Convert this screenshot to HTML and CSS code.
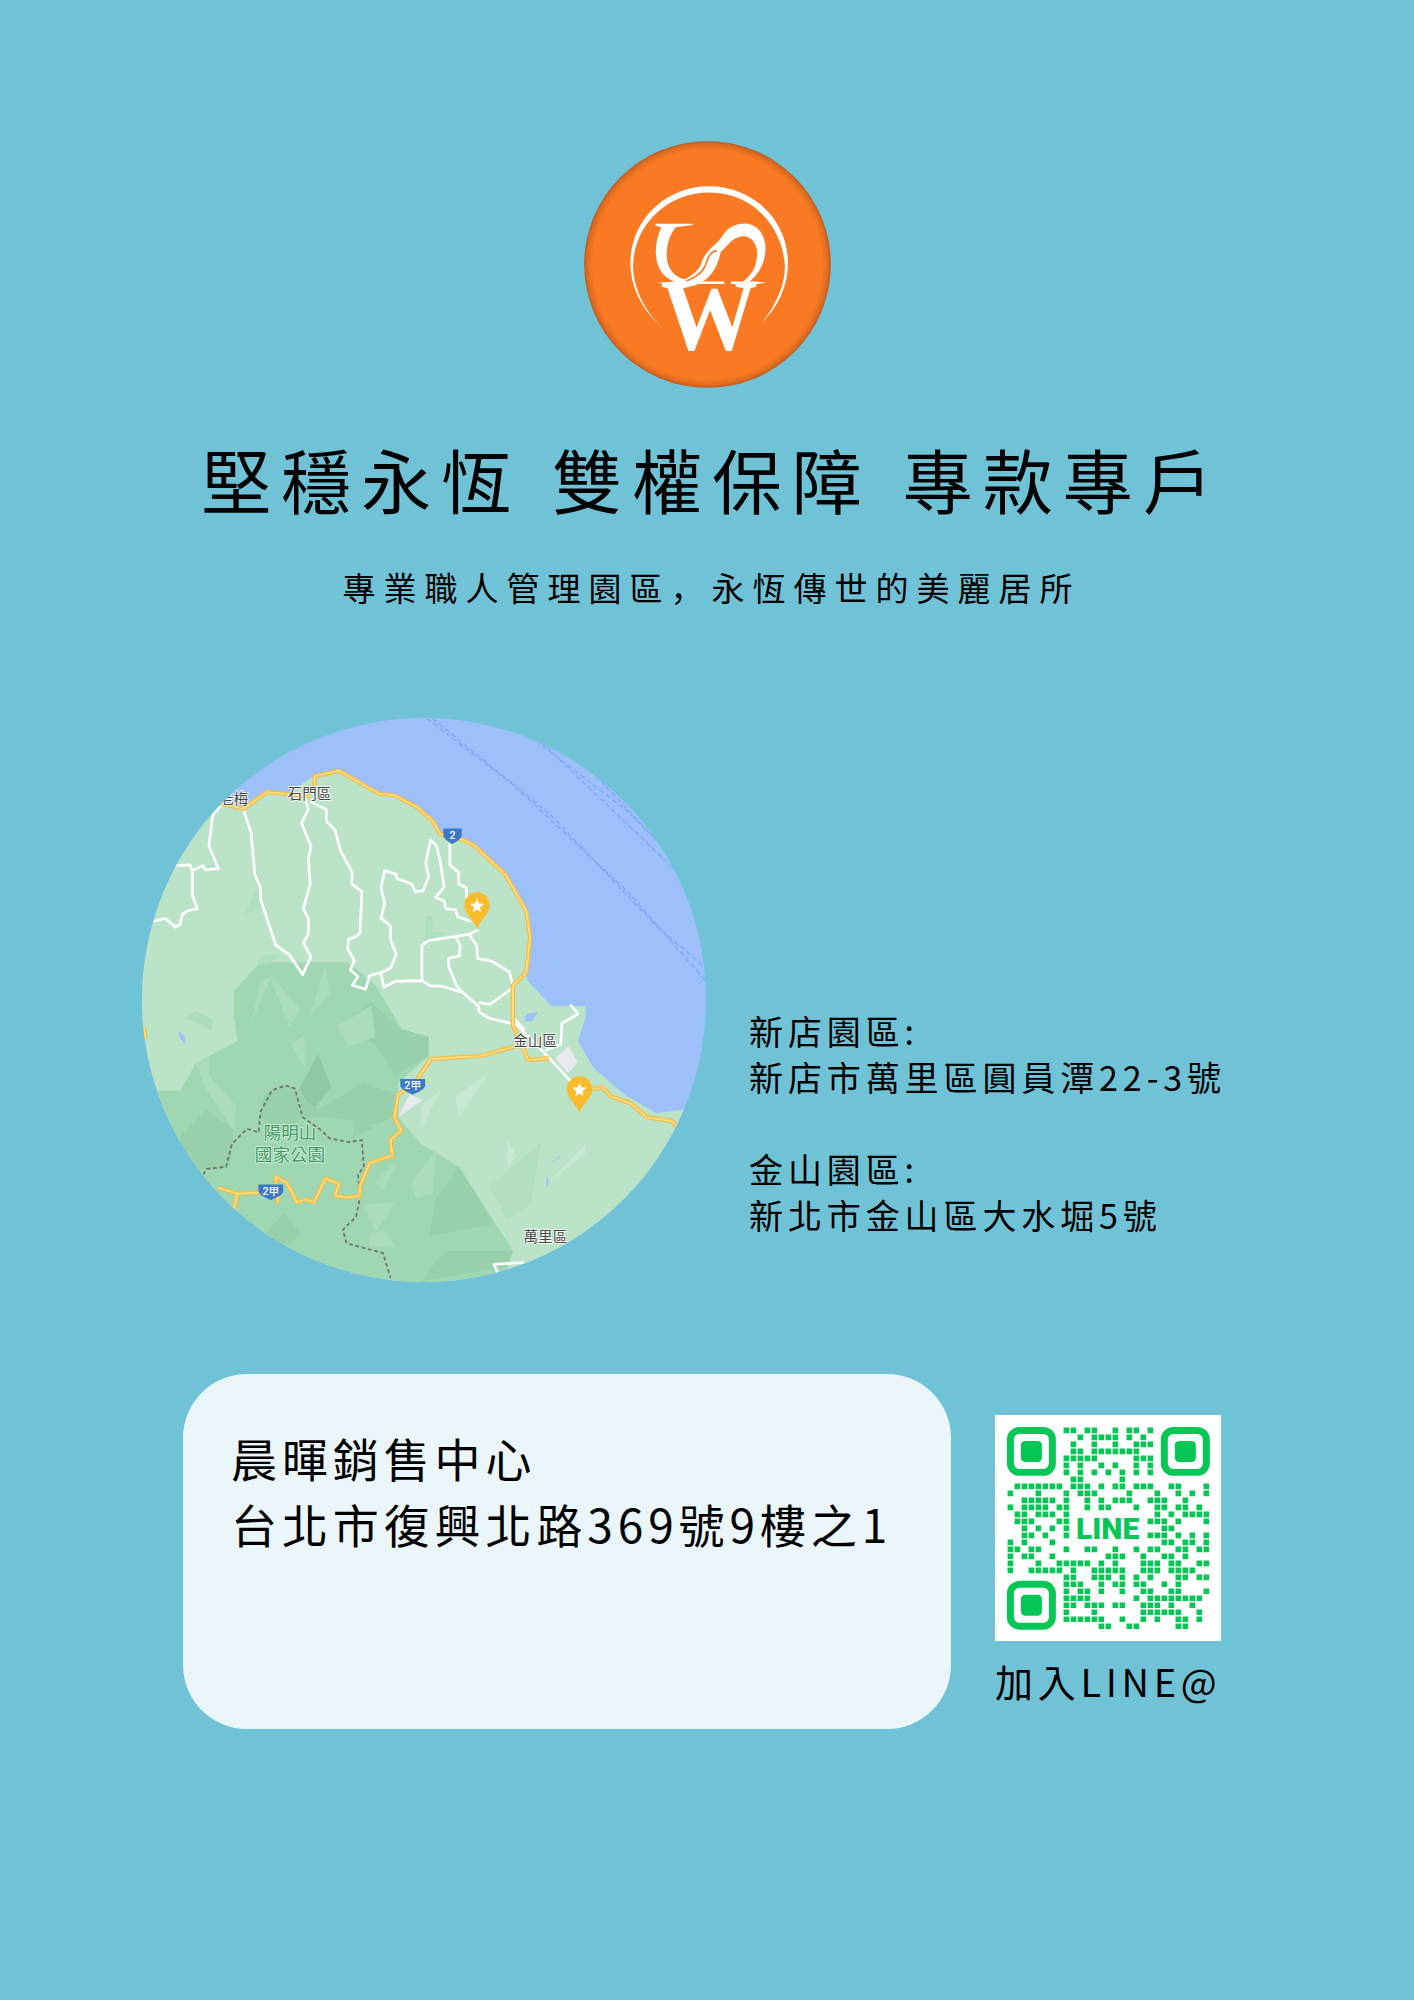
FILE: index.html
```html
<!DOCTYPE html>
<html lang="zh-Hant">
<head>
<meta charset="utf-8">
<title>堅穩永恆 雙權保障 專款專戶</title>
<link rel="stylesheet" href="styles.css">
</head>
<body>
<main class="page">
  <svg class="logo" viewBox="72 65 736 737" aria-label="logo">
    <defs>
      <radialGradient id="logoFill" cx="50%" cy="50%" r="50%">
        <stop offset="0.93" stop-color="#f97a23"/>
        <stop offset="0.98" stop-color="#dd6a1f"/>
        <stop offset="1" stop-color="#b75a20"/>
      </radialGradient>
    </defs>
    <circle cx="440" cy="433.500" r="368" fill="url(#logoFill)"/>
    <path class="logo-white" d="M305 622C245 570 210 500 210 430 210 300 315 200 445 200 575 200 680 300 680 430 680 500 650 560 600 610 640 560 671 500 671 440 665 315 570 219 445 219 320 219 222 315 218 435 218 500 250 570 305 622Z"/>
    <text class="logo-w" x="300" y="689" textLength="290" lengthAdjust="spacingAndGlyphs">W</text>
    <path class="logo-white" d="M285 312H395V316L345 322C330 340 318 370 318 410 320 450 345 475 380 480L365 490C345 488 325 480 310 465 278 430 280 370 302 322L285 318Z"/>
    <path class="logo-white" d="M360 485C395 465 415 455 425 420 440 385 470 375 490 340 510 315 540 308 560 312 600 320 618 360 612 400 608 440 585 470 565 485H545C575 465 590 430 588 395 585 365 565 345 540 350 510 355 495 385 480 395 470 440 450 480 400 497L365 497Z"/>
    <path class="logo-slit" d="M468 392C445 395 440 420 432 440 420 465 395 475 375 484"/>
    <path class="logo-white" d="M285 488L345 484H490V492H345Z"/>
    <path class="logo-white" d="M510 484H585L615 488 585 492H510Z"/>
  </svg>

  <h1 class="title">堅穩永恆 雙權保障 專款專戶</h1>
  <p class="subtitle">專業職人管理園區<span class="punct" lang="ja">，</span>永恆傳世的美麗居所</p>

  <section class="locations">
    <div class="map">
      <svg class="map-svg" viewBox="30 47 1475 1473" aria-label="map">
        <defs>
          <path id="mainRoads" d="M230 268L295 284 355 240 470 250M480 240L482 198 545 184 650 244 690 248 750 280 790 315 810 350 870 365 900 380 980 455 1035 550 1045 620 1035 712 1000 745 1000 850 1040 940 1095 936M1005 905L915 930 785 938 740 1005 700 1030 690 1090 708 1125 680 1150 685 1190 625 1210 600 1270 600 1295 565 1300 535 1295 545 1265 510 1250 480 1312 455 1305 435 1312 410 1262 380 1245 380 1285 280 1290 230 1275M280 1290L270 1330M385 1285L385 1315M1174 1020L1235 1012 1255 1035 1310 1055 1350 1090 1415 1100 1432 1118M35 855L40 885"/>
          <g id="pin">
            <path class="pin-body" d="M906 597C895 570 873 560 873 535A33 33 0 1 1 939 535C939 560 917 570 906 597Z"/>
            <polygon class="pin-star" points="906,519 911,531 924,532 914,541 917,554 906,547 895,554 898,541 888,532 901,531"/>
          </g>
          <path id="shield" d="M-24 -17H24V2C20 14 8 18 0 24-8 18-20 14-24 2Z"/>
        </defs>
        <rect class="sea" x="0" y="0" width="1568" height="1568"/>
        <path class="sea-lane" d="M775 47L1000 220 1300 500 1505 735M790 47L1100 300 1375 590 1505 700M1060 105L1300 290 1480 470M1075 110L1505 520M1215 195L1380 370"/>
        <polygon class="land" points="0,300 230,270 295,285 355,240 410,243 480,198 545,183 650,243 690,247 750,280 790,315 810,350 870,365 900,380 980,455 1035,550 1045,620 1035,720 1040,735 1100,800 1190,800 1190,830 1170,890 1210,960 1290,1030 1375,1080 1450,1070 1568,1000 1568,1568 0,1568"/>
        <polygon class="sea" points="1035,820 1065,815 1050,840 1030,840"/>
        <polygon class="sea" points="125,865 140,875 145,900 130,885"/>
        <polygon class="sea" points="1115,1195 1128,1190 1100,1210"/>
        <rect class="sea" x="1088" y="1248" width="5" height="22"/>
        <polygon class="hill" points="270,760 340,685 570,685 640,745 710,860 780,880 780,930 700,1000 700,1090 760,1160 860,1220 1000,1440 990,1470 960,1568 0,1568 0,1020 130,1020 170,950 280,890 270,820"/>
        <polygon class="hill-dark" points="440,1020 490,925 525,1010 480,1070"/>
        <polygon class="hill-mid" points="630,790 710,860 780,880 780,930 690,980 640,900 540,850"/>
        <polygon class="hill-mid" points="440,1030 490,1070 610,1000 695,1030 690,1090 640,1110 520,1090 450,1090"/>
        <polygon class="hill-mid" points="350,1030 405,1007 430,1015 450,1090 400,1130 340,1090"/>
        <polygon class="hill-mid" points="860,1220 950,1370 780,1400 800,1300"/>
        <polygon class="hill-mid" points="820,1440 1000,1440 985,1480 760,1520"/>
        <polygon class="hill-mid" points="130,1140 200,1070 270,1125 260,1220 190,1230 130,1220"/>
        <polygon class="hill-mid" points="590,1095 640,1115 580,1145"/>
        <polygon class="hill-mid" points="350,1400 400,1340 450,1400 360,1440"/>
        <polygon class="hill-light" points="170,950 205,935 205,980 275,1060 270,1125 200,1020"/>
        <polygon class="hill-light" points="370,720 445,810 415,855 367,725 315,845 340,735"/>
        <polygon class="hill-light" points="145,830 172,813 215,835 212,862"/>
        <polygon class="hill-light" points="420,900 455,875 455,960"/>
        <polygon class="hill-light" points="540,850 630,800 640,880 570,905"/>
        <polygon class="hill-light" points="470,820 510,690 520,770"/>
        <polygon class="hill-light" points="610,1320 695,1310 640,1390"/>
        <polygon class="hill-light" points="625,1400 660,1385 695,1430 625,1430"/>
        <polygon class="hill-light" points="640,1260 700,1200 660,1280"/>
        <polygon class="hill-light" points="735,1260 800,1175 790,1290 745,1300"/>
        <polygon class="facet" points="850,1035 935,975 860,1090"/>
        <polygon class="facet" points="760,1060 810,1020 760,1125"/>
        <polygon class="facet" points="1095,1260 1190,1160 1190,1185"/>
        <polygon class="facet" points="985,1150 1010,1190 985,1225"/>
        <polygon class="facet-dark" points="940,1270 1075,1155 1045,1320 985,1355"/>
        <polygon class="hill-soft" points="300,560 330,490 345,540"/>
        <polygon class="hill-soft" points="770,565 790,565 790,605 830,605 770,630"/>
        <polygon class="hill-soft" points="330,690 345,665 395,665 360,690"/>
        <polygon class="zone" points="1110,935 1145,905 1170,945 1145,975"/>
        <polygon class="zone" points="700,1090 730,1030 765,1045"/>
        <path class="park-line" d="M190 1240L200 1225 250 1220 265 1160 305 1120 335 1130 340 1075 370 1020 405 1007 430 1015 450 1090 500 1125 520 1145 570 1155 605 1150 610 1220 595 1240 600 1300 590 1350 555 1385 565 1420 660 1445 680 1510"/>
        <path class="road-white" d="M295 285L315 345 325 455 340 490 340 520 380 640 415 665 450 717 472 670 452 635 465 610 465 570 452 545 470 480 465 415 472 382 447 320 465 285 455 250M470 265L512 285 512 315 535 340 550 395 580 450 578 480 605 500 600 610 585 620 570 625 568 650 585 680 575 705 595 722 580 745 615 755 625 720 655 712 662 750 692 735 762 733 785 747 815 747 865 763M655 712L680 700 695 665 680 625 680 590 655 570 665 530 655 490 665 445 695 455 695 465 735 480 745 500 765 498 780 462 772 425 785 365 800 380 810 420 820 488 798 515 820 525 825 545 850 547 855 565 890 578M835 375L835 430 858 450 858 480 878 490 880 530M910 600L885 612 780 628 762 640 762 733M850 617L862 640 860 668 832 675 832 695 852 745 870 765 910 800 912 815 940 832 1010 848 1095 935 1150 995M885 612L905 640 908 675 945 682 990 710 1002 750 940 795 910 790M1150 795L1170 820 1128 845 1125 900 1085 915M1000 830L1030 860M120 432L155 430 162 445 190 432 195 443 230 440 205 380 215 300 240 270M162 445L162 510 175 545 150 550 135 560 130 585 118 593 90 570 60 578M960 1495L950 1475 1030 1470"/>
        <use href="#mainRoads" class="road-case"/>
        <use href="#mainRoads" class="road-core"/>
        <text class="map-label" x="270" y="270" text-anchor="middle">老梅</text>
        <text class="map-label" x="468" y="259" text-anchor="middle">石門區</text>
        <text class="map-label" x="1058" y="904" text-anchor="middle">金山區</text>
        <text class="map-label" x="1085" y="1416" text-anchor="middle">萬里區</text>
        <text class="map-park" x="417" y="1147" text-anchor="middle">陽明山</text>
        <text class="map-park" x="417" y="1205" text-anchor="middle">國家公園</text>
        <g transform="translate(842 352)"><use href="#shield" class="shield"/><text class="shield-text" y="10" text-anchor="middle">2</text></g>
        <use href="#shield" class="shield" transform="translate(738 1007) scale(1.35 1)"/>
        <text class="shield-text" x="738" y="1017" text-anchor="middle">2甲</text>
        <use href="#shield" class="shield" transform="translate(367 1283) scale(1.35 1)"/>
        <text class="shield-text" x="367" y="1293" text-anchor="middle">2甲</text>
        <use href="#pin"/>
        <use href="#pin" x="268" y="481"/>
      </svg>
    </div>
    <div class="addresses">
      <p class="address-block">新店園區:<br>新店市萬里區圓員潭22-3號</p>
      <p class="address-block">金山園區:<br>新北市金山區大水堀5號</p>
    </div>
  </section>

  <section class="contact">
    <div class="card">晨暉銷售中心<br>台北市復興北路369號9樓之1</div>
    <div class="line-box">
      <svg class="qr" viewBox="-1.7 -1.7 32.3 32.3" aria-label="QR code">
        <rect class="qr-bg" x="-1.7" y="-1.7" width="32.3" height="32.3"/>
        <g>
          <rect class="qr-ring" x=".5" y=".5" width="6" height="6" rx="1.3"/>
          <rect class="qr-eye" x="2" y="2" width="3" height="3" rx=".6"/>
        </g>
        <g transform="translate(22 0)">
          <rect class="qr-ring" x=".5" y=".5" width="6" height="6" rx="1.3"/>
          <rect class="qr-eye" x="2" y="2" width="3" height="3" rx=".6"/>
        </g>
        <g transform="translate(0 22)">
          <rect class="qr-ring" x=".5" y=".5" width="6" height="6" rx="1.3"/>
          <rect class="qr-eye" x="2" y="2" width="3" height="3" rx=".6"/>
        </g>
        <path class="qr-dots" transform="translate(.1 .5)" d="M8 0h2M11 0h2M15 0h1M17 0h2M20 0h1M10 1h1M12 1h4M17 1h1M19 1h1M9 2h1M12 2h1M15 2h1M18 2h3M9 3h2M12 3h7M8 4h5M18 4h3M8 5h1M10 5h1M13 5h1M15 5h1M18 5h1M20 5h1M8 6h1M10 6h1M12 6h1M14 6h1M16 6h1M18 6h1M20 6h1M9 7h2M16 7h1M1 8h7M9 8h3M13 8h1M15 8h2M18 8h3M23 8h2M28 8h1M0 9h1M4 9h1M8 9h1M10 9h3M17 9h1M21 9h1M24 9h1M26 9h1M28 9h1M2 10h5M8 10h1M11 10h1M13 10h1M15 10h3M20 10h3M25 10h1M0 11h1M2 11h4M7 11h2M11 11h1M13 11h2M18 11h1M21 11h2M24 11h2M27 11h1M1 12h2M4 12h3M8 12h1M21 12h1M23 12h1M25 12h4M1 13h3M7 13h2M20 13h3M24 13h1M28 13h1M2 14h1M4 14h1M6 14h1M8 14h1M22 14h2M2 15h2M5 15h1M8 15h1M20 15h3M24 15h1M26 15h1M28 15h1M0 16h1M2 16h1M6 16h1M22 16h2M25 16h2M28 16h1M0 17h2M3 17h2M8 17h1M11 17h2M15 17h1M18 17h1M20 17h2M24 17h2M27 17h2M0 18h1M2 18h2M6 18h1M14 18h3M19 18h1M22 18h2M25 18h1M0 19h1M4 19h1M7 19h5M13 19h1M15 19h1M19 19h3M23 19h2M27 19h2M0 20h1M3 20h5M9 20h1M12 20h5M19 20h3M23 20h4M8 21h2M12 21h3M16 21h1M18 21h1M20 21h1M24 21h2M27 21h2M8 22h3M13 22h1M15 22h2M18 22h2M22 22h1M24 22h1M8 23h1M10 23h2M13 23h1M16 23h1M19 23h2M23 23h2M28 23h1M8 24h4M18 24h1M20 24h8M8 25h2M11 25h3M15 25h2M19 25h3M23 25h1M26 25h1M8 26h1M12 26h1M19 26h6M27 26h1M8 27h6M16 27h1M19 27h1M21 27h1M24 27h2M27 27h1M13 28h2M17 28h2M24 28h2"/>
        <text class="qr-line" x="14.4" y="16" text-anchor="middle">LINE</text>
      </svg>
      <p class="line-label">加入LINE@</p>
    </div>
  </section>
</main>
</body>
</html>
```

FILE: styles.css
```css
* {
  box-sizing: border-box;
}

html,
body {
  margin: 0;
  padding: 0;
}

body {
  background: #70c2d6;
  color: #000;
  font-family: "Noto Sans CJK TC", "Noto Sans", sans-serif;
}

.page {
  display: flex;
  flex-direction: column;
  width: 1414px;
  min-height: 2000px;
  padding-top: 141px;
}

.logo {
  display: block;
  width: 247px;
  height: 247px;
  margin-left: 584px;
}

.logo-white {
  fill: #fff;
}

.logo-slit {
  fill: none;
  stroke: #f97a23;
  stroke-width: 5;
}

.logo-w {
  fill: #fff;
  font-family: "Liberation Serif", serif;
  font-size: 303px;
  font-weight: 700;
}

.title {
  margin: 51px 0 0;
  padding-left: 10px;
  font-size: 70px;
  font-weight: 400;
  line-height: 80px;
  letter-spacing: 10px;
  word-spacing: 5px;
  text-align: center;
  white-space: nowrap;
}

.subtitle {
  margin: 43px 0 0;
  padding-left: 9px;
  font-size: 33px;
  line-height: 50px;
  letter-spacing: 8px;
  text-align: center;
}

.punct {
  font-family: "Noto Sans CJK JP", sans-serif;
}

.locations {
  display: flex;
  align-items: flex-start;
  gap: 43px;
  margin-top: 106px;
  padding-left: 142px;
}

.map {
  flex: none;
  width: 564px;
  height: 564px;
  border-radius: 50%;
  overflow: hidden;
}

.map-svg {
  display: block;
  width: 564px;
  height: 564px;
}

.sea {
  fill: #9dc0fb;
}

.sea-lane {
  fill: none;
  stroke: #7fa8f2;
  stroke-width: 3.500;
  stroke-dasharray: 14 7;
}

.land {
  fill: #bbe3c8;
}

.hill {
  fill: #a0d7b3;
}

.hill-dark {
  fill: #8fc8a2;
}

.hill-mid {
  fill: #97d0aa;
}

.hill-light {
  fill: #abddbc;
}

.hill-soft {
  fill: #aedfbf;
}

.facet {
  fill: #c8e8d2;
}

.facet-dark {
  fill: #b2dfc1;
}

.zone {
  fill: #e8eaed;
}

.park-line {
  fill: none;
  stroke: #6f6f6f;
  stroke-width: 4.500;
  stroke-dasharray: 10 7;
}

.road-white {
  fill: none;
  stroke: #fff;
  stroke-width: 7;
  stroke-linejoin: round;
}

.road-case {
  fill: none;
  stroke: #f7b93c;
  stroke-width: 11;
  stroke-linejoin: round;
}

.road-core {
  fill: none;
  stroke: #fedd84;
  stroke-width: 5;
  stroke-linejoin: round;
}

.map-label {
  fill: #444;
  stroke: #fff;
  stroke-width: 4;
  paint-order: stroke;
  font-size: 38px;
}

.map-park {
  fill: #3c9a5f;
  stroke: #d9f0e0;
  stroke-width: 4;
  paint-order: stroke;
  font-size: 46px;
}

.shield {
  fill: #3b78c6;
}

.shield-text {
  fill: #fff;
  font-family: "Roboto", "Noto Sans CJK TC", sans-serif;
  font-size: 28px;
  font-weight: 500;
}

.pin-body {
  fill: #fbbc2c;
}

.pin-star {
  fill: #fff;
}

.addresses {
  display: flex;
  flex-direction: column;
  gap: 46px;
  padding-top: 290px;
  font-size: 34px;
  line-height: 46px;
  letter-spacing: 4.900px;
  white-space: nowrap;
}

.address-block {
  margin: 0;
}

.contact {
  display: flex;
  align-items: flex-start;
  gap: 44px;
  margin-top: 92px;
  padding-left: 183px;
}

.card {
  flex: none;
  width: 768px;
  height: 355px;
  padding: 50px 0 0 48px;
  border-radius: 64px;
  background: #ebf6fb;
  font-size: 46px;
  line-height: 66px;
  letter-spacing: 4.900px;
  white-space: nowrap;
}

.line-box {
  padding-top: 41px;
}

.qr {
  display: block;
  width: 226px;
  height: 226px;
}

.qr-bg {
  fill: #fff;
}

.qr-ring {
  fill: none;
  stroke: #06c755;
  stroke-width: 1;
}

.qr-eye {
  fill: #06c755;
}

.qr-dots {
  fill: none;
  stroke: #06c755;
  stroke-width: .8;
  stroke-dasharray: .8 .2;
}

.qr-line {
  fill: #06c755;
  font-family: "Roboto", sans-serif;
  font-size: 4.300px;
  font-weight: 900;
}

.line-label {
  margin: 15px 0 0;
  font-size: 38px;
  line-height: 50px;
  letter-spacing: 4.700px;
  white-space: nowrap;
}
```
